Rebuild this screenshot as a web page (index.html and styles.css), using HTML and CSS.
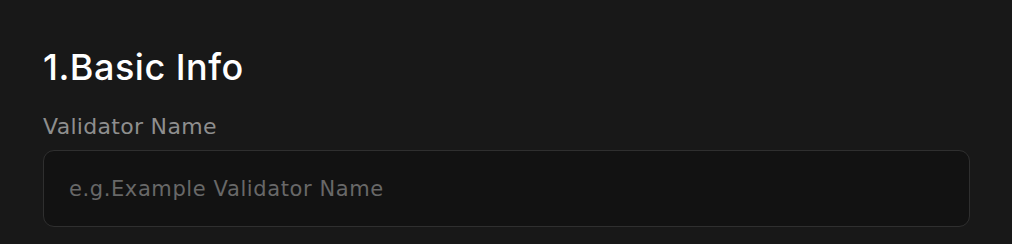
FILE: index.html
```html
<!DOCTYPE html>
<html lang="en">
<head>
<meta charset="utf-8">
<title>Basic Info</title>
<link rel="stylesheet" href="styles.css">
</head>
<body>
<section class="form-section">
  <h2 class="section-title">1.Basic Info</h2>
  <div class="field">
    <label class="field-label" for="validator-name">Validator Name</label>
    <input class="field-input" id="validator-name" type="text" placeholder="e.g.Example Validator Name">
  </div>
</section>
</body>
</html>
```

FILE: styles.css
```css
html, body {
  margin: 0;
  padding: 0;
  background: #181818;
}
body {
  width: 1012px;
  height: 244px;
  overflow: hidden;
}
.form-section {
  padding: 46px 43px 0 43px;
  display: flex;
  flex-direction: column;
}
.section-title {
  margin: 0;
  font-family: "Inter", sans-serif;
  font-weight: 500;
  font-size: 36px;
  line-height: 42px;
  color: #ffffff;
  letter-spacing: 0.5px;
}
.field {
  margin-top: 28px;
  display: flex;
  flex-direction: column;
  gap: 12px;
}
.field-label {
  font-family: "DejaVu Sans", sans-serif;
  font-size: 22px;
  line-height: 22px;
  color: #8e8e8e;
  letter-spacing: 0.3px;
}
.field-input {
  box-sizing: border-box;
  width: 927px;
  height: 77px;
  padding: 0 25px;
  background: #121212;
  border: 1px solid #2f2f2f;
  border-radius: 11px;
  font-family: "DejaVu Sans", sans-serif;
  font-size: 21px;
  letter-spacing: 0.6px;
  color: #ddd;
  outline: none;
}
.field-input::placeholder {
  color: #686868;
  opacity: 1;
}
```
